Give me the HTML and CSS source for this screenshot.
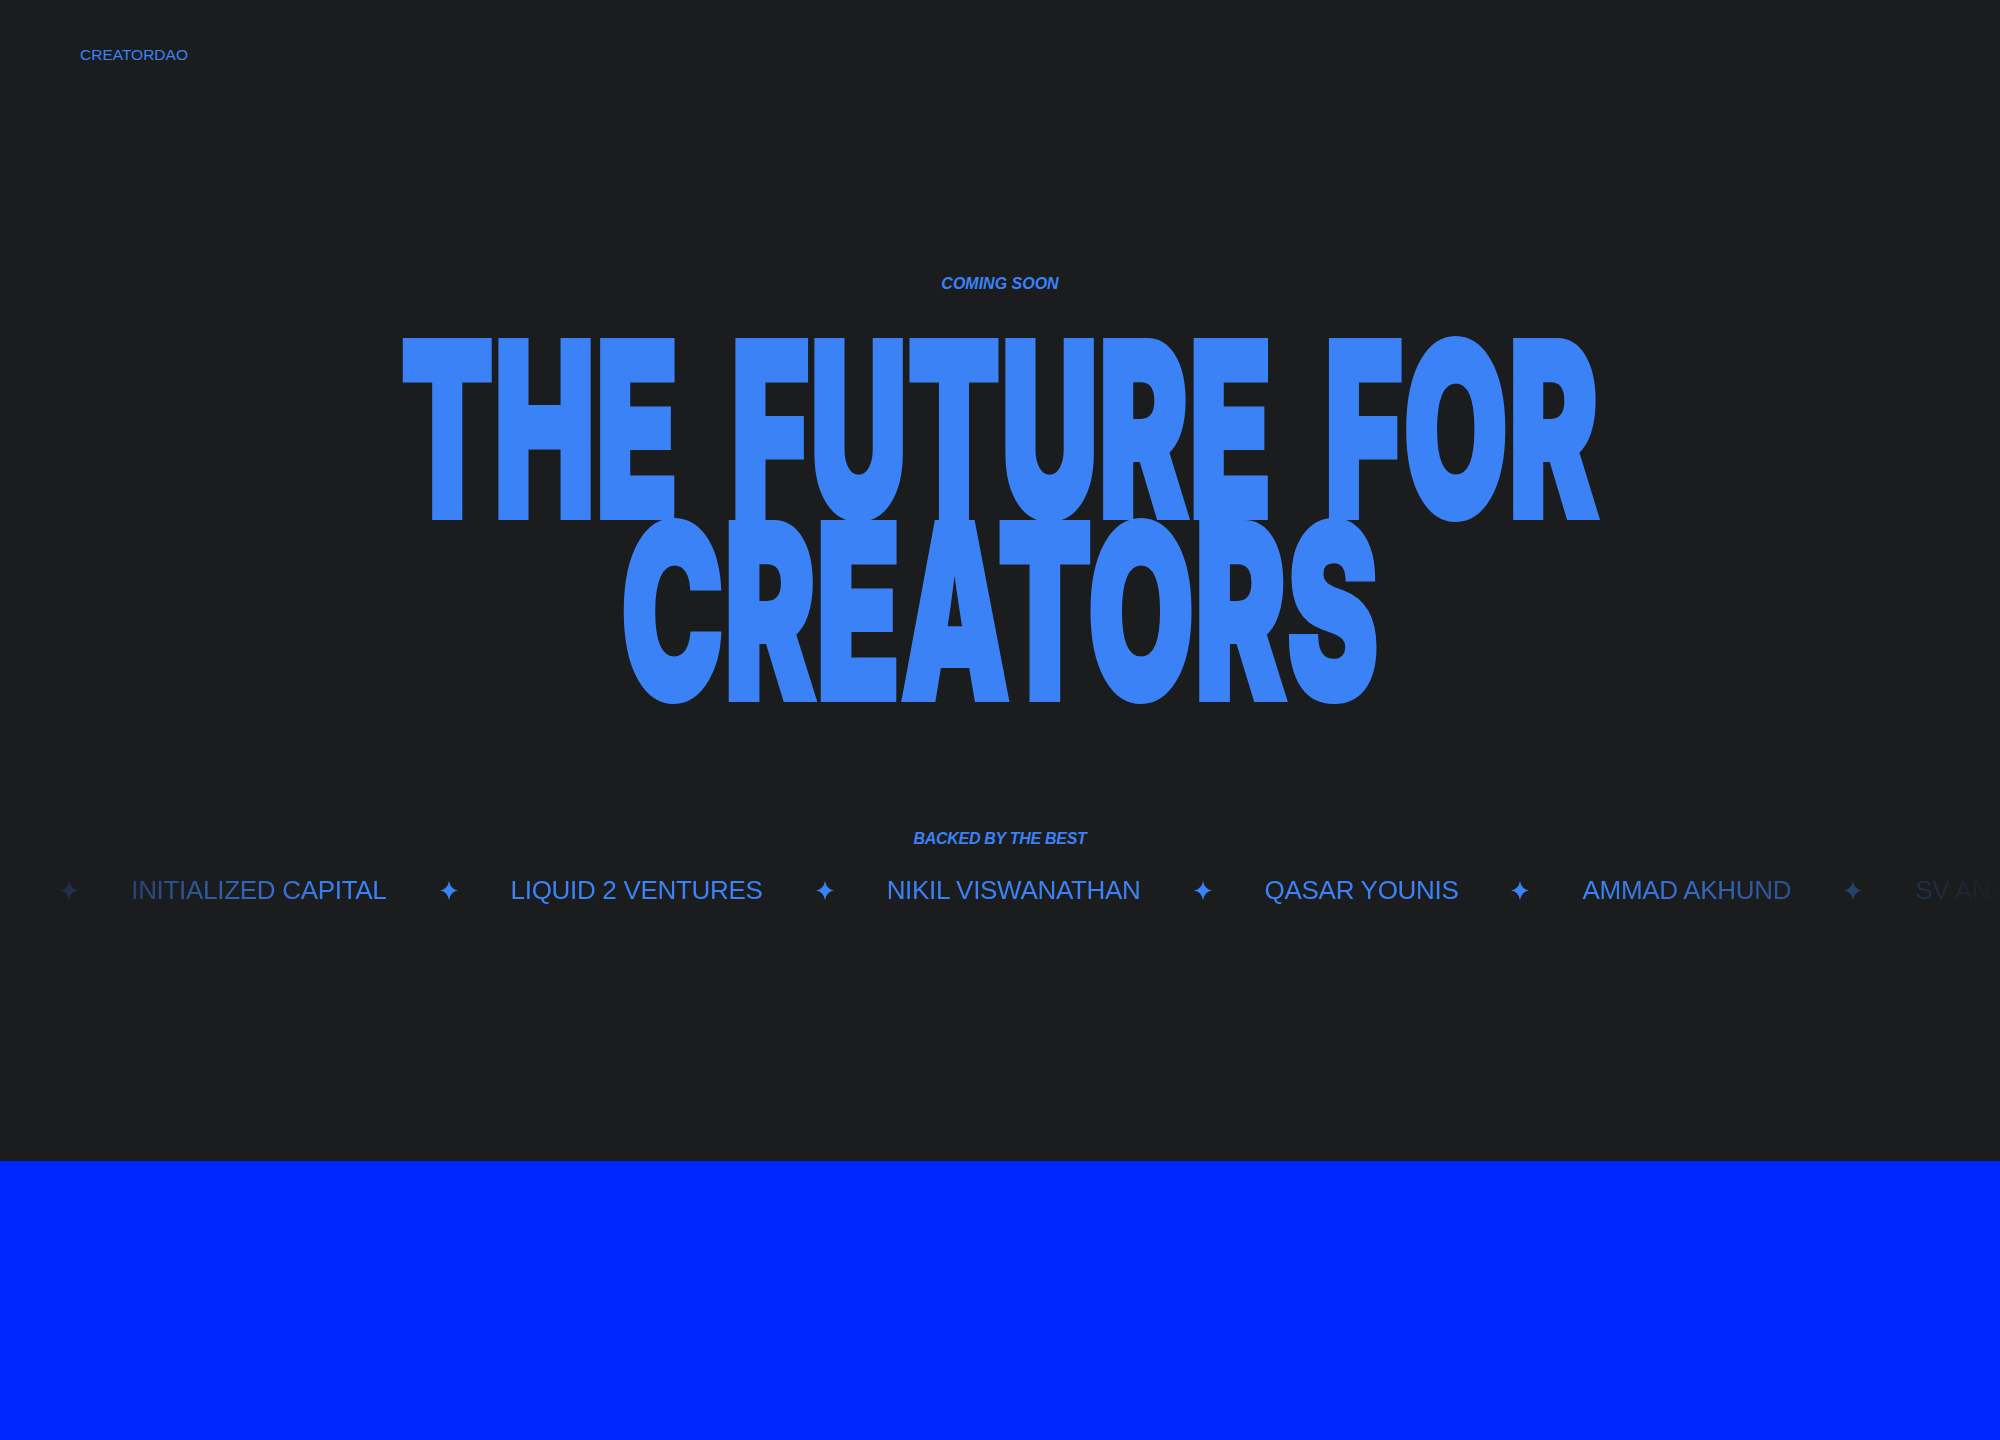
FILE: index.html
```html
<!DOCTYPE html>
<html lang="en">
<head>
<meta charset="utf-8">
<title>CreatorDAO</title>
<link rel="stylesheet" href="styles.css">
</head>
<body>
<div class="dark">
  <header class="header">
    <a class="logo" href="#">CREATORDAO</a>
  </header>
  <main class="hero">
    <p class="eyebrow">COMING SOON</p>
    <h1 class="headline">
      <span class="line line-1">THE FUTURE FOR</span>
      <span class="line line-2">CREATORS</span>
    </h1>
    <p class="eyebrow backed">BACKED BY THE BEST</p>
    <div class="marquee">
      <div class="track">
        <span class="item">SV ANGEL</span>
        <svg class="star" viewBox="0 0 18 19"><path d="M9 0Q10.4 8.1 18 9.5Q10.4 10.9 9 19Q7.6 10.9 0 9.5Q7.6 8.1 9 0Z"/></svg>
        <span class="item">INITIALIZED CAPITAL</span>
        <svg class="star" viewBox="0 0 18 19"><path d="M9 0Q10.4 8.1 18 9.5Q10.4 10.9 9 19Q7.6 10.9 0 9.5Q7.6 8.1 9 0Z"/></svg>
        <span class="item">LIQUID 2 VENTURES</span>
        <svg class="star" viewBox="0 0 18 19"><path d="M9 0Q10.4 8.1 18 9.5Q10.4 10.9 9 19Q7.6 10.9 0 9.5Q7.6 8.1 9 0Z"/></svg>
        <span class="item">NIKIL VISWANATHAN</span>
        <svg class="star" viewBox="0 0 18 19"><path d="M9 0Q10.4 8.1 18 9.5Q10.4 10.9 9 19Q7.6 10.9 0 9.5Q7.6 8.1 9 0Z"/></svg>
        <span class="item">QASAR YOUNIS</span>
        <svg class="star" viewBox="0 0 18 19"><path d="M9 0Q10.4 8.1 18 9.5Q10.4 10.9 9 19Q7.6 10.9 0 9.5Q7.6 8.1 9 0Z"/></svg>
        <span class="item">AMMAD AKHUND</span>
        <svg class="star" viewBox="0 0 18 19"><path d="M9 0Q10.4 8.1 18 9.5Q10.4 10.9 9 19Q7.6 10.9 0 9.5Q7.6 8.1 9 0Z"/></svg>
        <span class="item">SV ANGEL</span>
        <svg class="star" viewBox="0 0 18 19"><path d="M9 0Q10.4 8.1 18 9.5Q10.4 10.9 9 19Q7.6 10.9 0 9.5Q7.6 8.1 9 0Z"/></svg>
        <span class="item">INITIALIZED CAPITAL</span>
      </div>
    </div>
  </main>
</div>
<section class="blue"></section>
</body>
</html>
```

FILE: styles.css
```css
* { box-sizing: border-box; }

html, body {
  margin: 0;
  padding: 0;
  background: #1b1c1e;
}

body {
  font-family: "Liberation Sans", Arial, sans-serif;
  color: #3b82f6;
  overflow-x: hidden;
}

.dark {
  height: 1161px;
  background: #1b1c1e;
  overflow: hidden;
}

.header {
  padding: 46px 80px 0;
  height: 64px;
}

.logo {
  display: inline-block;
  font-size: 15.5px;
  line-height: 18px;
  color: #3b82f6;
  text-decoration: none;
}

.hero {
  display: flex;
  flex-direction: column;
  align-items: center;
}

.eyebrow {
  margin: 210px 0 0;
  font-size: 16px;
  line-height: 20px;
  font-weight: 700;
  font-style: italic;
  color: #3b82f6;
}

.headline {
  margin: 44px 0 0;
  width: 100%;
  display: flex;
  flex-direction: column;
  align-items: center;
  font-family: Inter, "Roboto", sans-serif;
  font-weight: 900;
  font-size: 242px;
  line-height: 182px;
  color: #3b82f6;
  letter-spacing: 0;
  white-space: nowrap;
}

.line {
  display: block;
  width: max-content;
  -webkit-text-stroke: 6px #3b82f6;
}

.line-1 {
  transform: scaleX(0.56);
  word-spacing: 45px;
}

.line-2 {
  transform: scaleX(0.57);
}

.backed {
  margin-top: 127px;
  letter-spacing: -0.3px;
}

.marquee {
  margin-top: 25px;
  width: 100%;
  overflow: hidden;
  -webkit-mask-image: linear-gradient(to right, transparent 0%, #000 17%, #000 80%, transparent 100%);
  mask-image: linear-gradient(to right, transparent 0%, #000 17%, #000 80%, transparent 100%);
}

.track {
  display: flex;
  align-items: center;
  gap: 53px;
  margin-left: -119px;
  white-space: nowrap;
}

.item {
  font-size: 26px;
  line-height: 32px;
  letter-spacing: -0.3px;
  color: #3b82f6;
}

.star {
  flex: none;
  width: 18px;
  height: 19px;
  fill: #3b82f6;
}

.blue {
  height: 279px;
  background: #0027ff;
}
```
